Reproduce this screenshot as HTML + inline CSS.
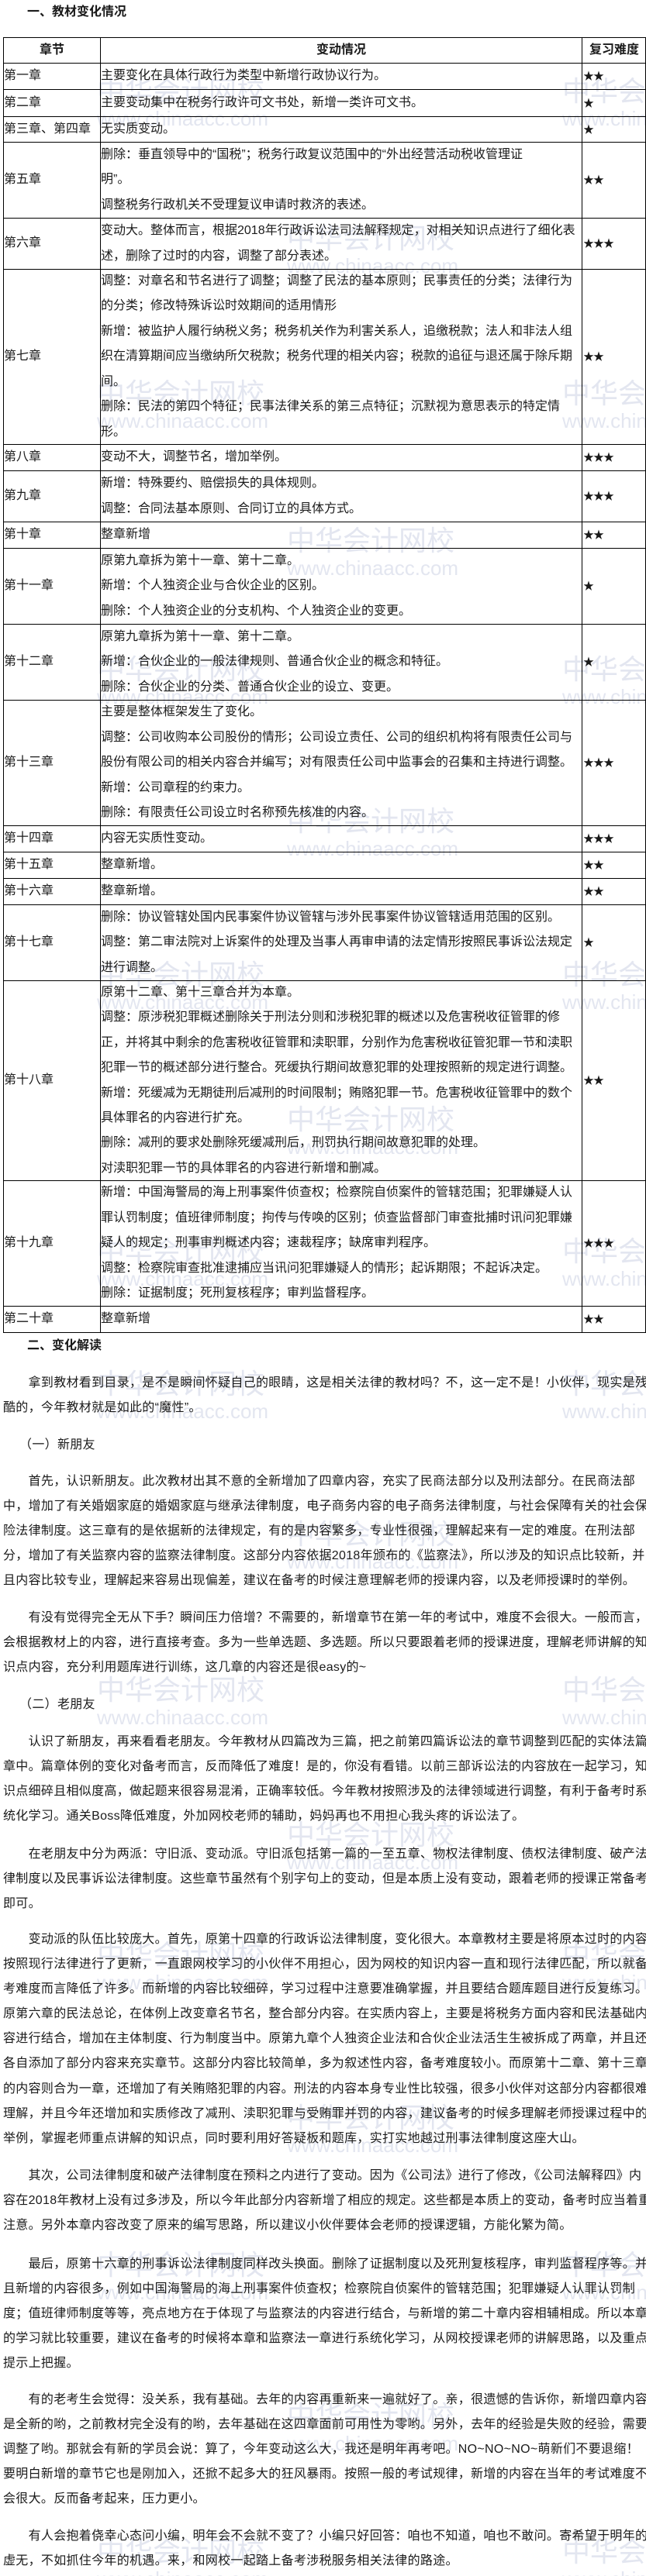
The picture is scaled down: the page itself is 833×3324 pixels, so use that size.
<!DOCTYPE html>
<html><head><meta charset="utf-8">
<style>
*{margin:0;padding:0;box-sizing:border-box}
html,body{width:833px;height:3324px;background:#fff;overflow:hidden}
body{position:relative;font-family:"Liberation Sans","Noto Sans CJK SC","WenQuanYi Zen Hei",sans-serif;color:#1a1a1a;font-size:16px}
.wm{position:absolute;color:#e3e6f0;font-size:36px;line-height:36px;white-space:nowrap;z-index:0}
.wm span{display:block;font-size:26px;line-height:30px;margin-top:2px}
.h{position:absolute;left:35px;font-weight:bold;font-size:16px;line-height:32px;white-space:nowrap;z-index:2}
.row{position:absolute;left:4px;width:829px;border-top:1px solid #000;z-index:2}
.c{position:absolute;top:0;bottom:0;display:flex;align-items:center;line-height:32.4px;white-space:nowrap}
.c1{left:1px;width:124px}
.c2{left:126px;width:620px}
.c3{left:748px;width:80px;font-size:14px;letter-spacing:-1px}
.hd .c{justify-content:center;font-weight:bold}
.vl{position:absolute;top:48px;height:1672px;width:1px;background:#000;z-index:3}
.p{position:absolute;left:4px;width:829px;line-height:32.1px;white-space:nowrap;letter-spacing:0.3px;z-index:2}
</style></head><body>

<div class="wm" style="left:125px;top:100px">中华会计网校<span>www.chinaacc.com</span></div>
<div class="wm" style="left:725px;top:100px">中华会计网校<span>www.china</span></div>
<div class="wm" style="left:370px;top:290px">中华会计网校<span>www.chinaacc.com</span></div>
<div class="wm" style="left:125px;top:490px">中华会计网校<span>www.chinaacc.com</span></div>
<div class="wm" style="left:725px;top:490px">中华会计网校<span>www.china</span></div>
<div class="wm" style="left:370px;top:680px">中华会计网校<span>www.chinaacc.com</span></div>
<div class="wm" style="left:125px;top:846px">中华会计网校<span>www.chinaacc.com</span></div>
<div class="wm" style="left:725px;top:846px">中华会计网校<span>www.china</span></div>
<div class="wm" style="left:370px;top:1042px">中华会计网校<span>www.chinaacc.com</span></div>
<div class="wm" style="left:125px;top:1240px">中华会计网校<span>www.chinaacc.com</span></div>
<div class="wm" style="left:725px;top:1240px">中华会计网校<span>www.china</span></div>
<div class="wm" style="left:370px;top:1427px">中华会计网校<span>www.chinaacc.com</span></div>
<div class="wm" style="left:125px;top:1597px">中华会计网校<span>www.chinaacc.com</span></div>
<div class="wm" style="left:725px;top:1597px">中华会计网校<span>www.china</span></div>
<div class="wm" style="left:125px;top:1768px">中华会计网校<span>www.chinaacc.com</span></div>
<div class="wm" style="left:725px;top:1768px">中华会计网校<span>www.china</span></div>
<div class="wm" style="left:370px;top:1962px">中华会计网校<span>www.chinaacc.com</span></div>
<div class="wm" style="left:125px;top:2163px">中华会计网校<span>www.chinaacc.com</span></div>
<div class="wm" style="left:725px;top:2163px">中华会计网校<span>www.china</span></div>
<div class="wm" style="left:370px;top:2350px">中华会计网校<span>www.chinaacc.com</span></div>
<div class="wm" style="left:125px;top:2505px">中华会计网校<span>www.chinaacc.com</span></div>
<div class="wm" style="left:725px;top:2505px">中华会计网校<span>www.china</span></div>
<div class="wm" style="left:370px;top:2715px">中华会计网校<span>www.chinaacc.com</span></div>
<div class="wm" style="left:125px;top:2905px">中华会计网校<span>www.chinaacc.com</span></div>
<div class="wm" style="left:725px;top:2905px">中华会计网校<span>www.china</span></div>
<div class="wm" style="left:370px;top:3100px">中华会计网校<span>www.chinaacc.com</span></div>
<div class="wm" style="left:125px;top:3275px">中华会计网校<span>www.chinaacc.com</span></div>
<div class="wm" style="left:725px;top:3275px">中华会计网校<span>www.china</span></div>

<div class="h" style="top:0px">一、教材变化情况</div>

<div class="vl" style="left:4px"></div>
<div class="vl" style="left:129px"></div>
<div class="vl" style="left:750px"></div>
<div class="vl" style="left:832px"></div>
<div class="row" style="top:1719px;height:1px"></div>

<div class="row hd" style="top:48px;height:33px"><div class="c c1">章节</div><div class="c c2">变动情况</div><div class="c c3" style="font-size:16px;letter-spacing:0">复习难度</div></div>
<div class="row" style="top:81px;height:34px"><div class="c c1">第一章</div><div class="c c2">主要变化在具体行政行为类型中新增行政协议行为。</div><div class="c c3">★★</div></div>
<div class="row" style="top:115px;height:35px"><div class="c c1">第二章</div><div class="c c2">主要变动集中在税务行政许可文书处，新增一类许可文书。</div><div class="c c3">★</div></div>
<div class="row" style="top:150px;height:33px"><div class="c c1">第三章、第四章</div><div class="c c2">无实质变动。</div><div class="c c3">★</div></div>
<div class="row" style="top:183px;height:98px"><div class="c c1">第五章</div><div class="c c2"><div>删除：垂直领导中的“国税”；税务行政复议范围中的“外出经营活动税收管理证<br>明”。<br>调整税务行政机关不受理复议申请时救济的表述。</div></div><div class="c c3">★★</div></div>
<div class="row" style="top:281px;height:66px"><div class="c c1">第六章</div><div class="c c2"><div>变动大。整体而言，根据2018年行政诉讼法司法解释规定，对相关知识点进行了细化表<br>述，删除了过时的内容，调整了部分表述。</div></div><div class="c c3">★★★</div></div>
<div class="row" style="top:347px;height:226px"><div class="c c1">第七章</div><div class="c c2"><div>调整：对章名和节名进行了调整；调整了民法的基本原则；民事责任的分类；法律行为<br>的分类；修改特殊诉讼时效期间的适用情形<br>新增：被监护人履行纳税义务；税务机关作为利害关系人，追缴税款；法人和非法人组<br>织在清算期间应当缴纳所欠税款；税务代理的相关内容；税款的追征与退还属于除斥期<br>间。<br>删除：民法的第四个特征；民事法律关系的第三点特征；沉默视为意思表示的特定情<br>形。</div></div><div class="c c3">★★</div></div>
<div class="row" style="top:573px;height:34px"><div class="c c1">第八章</div><div class="c c2">变动不大，调整节名，增加举例。</div><div class="c c3">★★★</div></div>
<div class="row" style="top:607px;height:66px"><div class="c c1">第九章</div><div class="c c2"><div>新增：特殊要约、赔偿损失的具体规则。<br>调整：合同法基本原则、合同订立的具体方式。</div></div><div class="c c3">★★★</div></div>
<div class="row" style="top:673px;height:34px"><div class="c c1">第十章</div><div class="c c2">整章新增</div><div class="c c3">★★</div></div>
<div class="row" style="top:707px;height:98px"><div class="c c1">第十一章</div><div class="c c2"><div>原第九章拆为第十一章、第十二章。<br>新增：个人独资企业与合伙企业的区别。<br>删除：个人独资企业的分支机构、个人独资企业的变更。</div></div><div class="c c3">★</div></div>
<div class="row" style="top:805px;height:98px"><div class="c c1">第十二章</div><div class="c c2"><div>原第九章拆为第十一章、第十二章。<br>新增：合伙企业的一般法律规则、普通合伙企业的概念和特征。<br>删除：合伙企业的分类、普通合伙企业的设立、变更。</div></div><div class="c c3">★</div></div>
<div class="row" style="top:903px;height:162px"><div class="c c1">第十三章</div><div class="c c2"><div>主要是整体框架发生了变化。<br>调整：公司收购本公司股份的情形；公司设立责任、公司的组织机构将有限责任公司与<br>股份有限公司的相关内容合并编写；对有限责任公司中监事会的召集和主持进行调整。<br>新增：公司章程的约束力。<br>删除：有限责任公司设立时名称预先核准的内容。</div></div><div class="c c3">★★★</div></div>
<div class="row" style="top:1065px;height:34px"><div class="c c1">第十四章</div><div class="c c2">内容无实质性变动。</div><div class="c c3">★★★</div></div>
<div class="row" style="top:1099px;height:34px"><div class="c c1">第十五章</div><div class="c c2">整章新增。</div><div class="c c3">★★</div></div>
<div class="row" style="top:1133px;height:34px"><div class="c c1">第十六章</div><div class="c c2">整章新增。</div><div class="c c3">★★</div></div>
<div class="row" style="top:1167px;height:98px"><div class="c c1">第十七章</div><div class="c c2"><div>删除：协议管辖处国内民事案件协议管辖与涉外民事案件协议管辖适用范围的区别。<br>调整：第二审法院对上诉案件的处理及当事人再审申请的法定情形按照民事诉讼法规定<br>进行调整。</div></div><div class="c c3">★</div></div>
<div class="row" style="top:1265px;height:258px"><div class="c c1">第十八章</div><div class="c c2"><div>原第十二章、第十三章合并为本章。<br>调整：原涉税犯罪概述删除关于刑法分则和涉税犯罪的概述以及危害税收征管罪的修<br>正，并将其中剩余的危害税收征管罪和渎职罪，分别作为危害税收征管犯罪一节和渎职<br>犯罪一节的概述部分进行整合。死缓执行期间故意犯罪的处理按照新的规定进行调整。<br>新增：死缓减为无期徒刑后减刑的时间限制；贿赂犯罪一节。危害税收征管罪中的数个<br>具体罪名的内容进行扩充。<br>删除：减刑的要求处删除死缓减刑后，刑罚执行期间故意犯罪的处理。<br>对渎职犯罪一节的具体罪名的内容进行新增和删减。</div></div><div class="c c3">★★</div></div>
<div class="row" style="top:1523px;height:162px"><div class="c c1">第十九章</div><div class="c c2"><div>新增：中国海警局的海上刑事案件侦查权；检察院自侦案件的管辖范围；犯罪嫌疑人认<br>罪认罚制度；值班律师制度；拘传与传唤的区别；侦查监督部门审查批捕时讯问犯罪嫌<br>疑人的规定；刑事审判概述内容；速裁程序；缺席审判程序。<br>调整：检察院审查批准逮捕应当讯问犯罪嫌疑人的情形；起诉期限；不起诉决定。<br>删除：证据制度；死刑复核程序；审判监督程序。</div></div><div class="c c3">★★★</div></div>
<div class="row" style="top:1685px;height:34px"><div class="c c1">第二十章</div><div class="c c2">整章新增</div><div class="c c3">★★</div></div>

<div class="h" style="top:1721px">二、变化解读</div>

<div class="p" style="top:1769px">　　拿到教材看到目录，是不是瞬间怀疑自己的眼睛，这是相关法律的教材吗？不，这一定不是！小伙伴，现实是残<br>酷的，今年教材就是如此的“魔性”。</div>
<div class="p" style="top:1849px">　 （一）新朋友</div>
<div class="p" style="top:1896px">　　首先，认识新朋友。此次教材出其不意的全新增加了四章内容，充实了民商法部分以及刑法部分。在民商法部<br>中，增加了有关婚姻家庭的婚姻家庭与继承法律制度，电子商务内容的电子商务法律制度，与社会保障有关的社会保<br>险法律制度。这三章有的是依据新的法律规定，有的是内容繁多，专业性很强，理解起来有一定的难度。在刑法部<br>分，增加了有关监察内容的监察法律制度。这部分内容依据2018年颁布的《监察法》，所以涉及的知识点比较新，并<br>且内容比较专业，理解起来容易出现偏差，建议在备考的时候注意理解老师的授课内容，以及老师授课时的举例。</div>
<div class="p" style="top:2072px">　　有没有觉得完全无从下手？瞬间压力倍增？不需要的，新增章节在第一年的考试中，难度不会很大。一般而言，<br>会根据教材上的内容，进行直接考查。多为一些单选题、多选题。所以只要跟着老师的授课进度，理解老师讲解的知<br>识点内容，充分利用题库进行训练，这几章的内容还是很easy的~</div>
<div class="p" style="top:2184px">　 （二）老朋友</div>
<div class="p" style="top:2232px">　　认识了新朋友，再来看看老朋友。今年教材从四篇改为三篇，把之前第四篇诉讼法的章节调整到匹配的实体法篇<br>章中。篇章体例的变化对备考而言，反而降低了难度！是的，你没有看错。以前三部诉讼法的内容放在一起学习，知<br>识点细碎且相似度高，做起题来很容易混淆，正确率较低。今年教材按照涉及的法律领域进行调整，有利于备考时系<br>统化学习。通关Boss降低难度，外加网校老师的辅助，妈妈再也不用担心我头疼的诉讼法了。</div>
<div class="p" style="top:2377px">　　在老朋友中分为两派：守旧派、变动派。守旧派包括第一篇的一至五章、物权法律制度、债权法律制度、破产法<br>律制度以及民事诉讼法律制度。这些章节虽然有个别字句上的变动，但是本质上没有变动，跟着老师的授课正常备考<br>即可。</div>
<div class="p" style="top:2487px">　　变动派的队伍比较庞大。首先，原第十四章的行政诉讼法律制度，变化很大。本章教材主要是将原本过时的内容<br>按照现行法律进行了更新，一直跟网校学习的小伙伴不用担心，因为网校的知识内容一直和现行法律匹配，所以就备<br>考难度而言降低了许多。而新增的内容比较细碎，学习过程中注意要准确掌握，并且要结合题库题目进行反复练习。<br>原第六章的民法总论，在体例上改变章名节名，整合部分内容。在实质内容上，主要是将税务方面内容和民法基础内<br>容进行结合，增加在主体制度、行为制度当中。原第九章个人独资企业法和合伙企业法活生生被拆成了两章，并且还<br>各自添加了部分内容来充实章节。这部分内容比较简单，多为叙述性内容，备考难度较小。而原第十二章、第十三章<br>的内容则合为一章，还增加了有关贿赂犯罪的内容。刑法的内容本身专业性比较强，很多小伙伴对这部分内容都很难<br>理解，并且今年还增加和实质修改了减刑、渎职犯罪与受贿罪并罚的内容，建议备考的时候多理解老师授课过程中的<br>举例，掌握老师重点讲解的知识点，同时要利用好答疑板和题库，实打实地越过刑事法律制度这座大山。</div>
<div class="p" style="top:2792px">　　其次，公司法律制度和破产法律制度在预料之内进行了变动。因为《公司法》进行了修改，《公司法解释四》内<br>容在2018年教材上没有过多涉及，所以今年此部分内容新增了相应的规定。这些都是本质上的变动，备考时应当着重<br>注意。另外本章内容改变了原来的编写思路，所以建议小伙伴要体会老师的授课逻辑，方能化繁为简。</div>
<div class="p" style="top:2906px">　　最后，原第十六章的刑事诉讼法律制度同样改头换面。删除了证据制度以及死刑复核程序，审判监督程序等。并<br>且新增的内容很多，例如中国海警局的海上刑事案件侦查权；检察院自侦案件的管辖范围；犯罪嫌疑人认罪认罚制<br>度；值班律师制度等等，亮点地方在于体现了与监察法的内容进行结合，与新增的第二十章内容相辅相成。所以本章<br>的学习就比较重要，建议在备考的时候将本章和监察法一章进行系统化学习，从网校授课老师的讲解思路，以及重点<br>提示上把握。</div>
<div class="p" style="top:3081px">　　有的老考生会觉得：没关系，我有基础。去年的内容再重新来一遍就好了。亲，很遗憾的告诉你，新增四章内容<br>是全新的哟，之前教材完全没有的哟，去年基础在这四章面前可用性为零哟。另外，去年的经验是失败的经验，需要<br>调整了哟。那就会有新的学员会说：算了，今年变动这么大，我还是明年再考吧。NO~NO~NO~萌新们不要退缩！<br>要明白新增的章节它也是刚加入，还掀不起多大的狂风暴雨。按照一般的考试规律，新增的内容在当年的考试难度不<br>会很大。反而备考起来，压力更小。</div>
<div class="p" style="top:3257px">　　有人会抱着侥幸心态问小编，明年会不会就不变了？小编只好回答：咱也不知道，咱也不敢问。寄希望于明年的<br>虚无，不如抓住今年的机遇。来，和网校一起踏上备考涉税服务相关法律的路途。</div>

</body></html>
